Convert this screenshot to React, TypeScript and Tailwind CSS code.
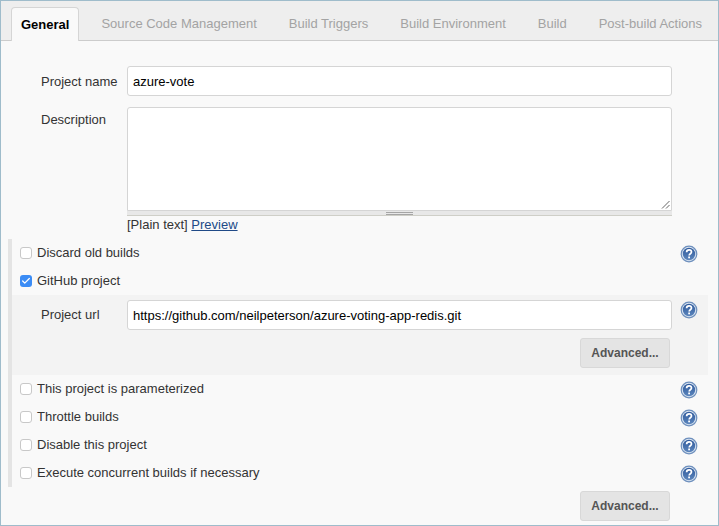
import { Check } from "lucide-react";

const tabs = [
  "Source Code Management",
  "Build Triggers",
  "Build Environment",
  "Build",
  "Post-build Actions",
];

function HelpIcon() {
  return (
    <svg aria-hidden="true" className="h-[18px] w-[18px] shrink-0" viewBox="0 0 18 18">
      <defs>
        <linearGradient id="help-fill" x1="0" y1="0" x2="0" y2="1">
          <stop offset="0" stopColor="#2f5a9c" />
          <stop offset="1" stopColor="#5c86bd" />
        </linearGradient>
      </defs>
      <circle cx="9" cy="9" r="8.4" fill="#6d8fbd" />
      <circle cx="9" cy="9" r="7.2" fill="#dbe5f1" />
      <circle cx="9" cy="9" r="6.2" fill="url(#help-fill)" />
      <path
        d="M6.6 7.2c0-1.5 1-2.4 2.5-2.4s2.4.9 2.4 2.1c0 1.8-2.3 1.9-2.3 3.6"
        fill="none"
        stroke="#fff"
        strokeWidth="1.7"
      />
      <rect x="8.2" y="11.5" width="1.8" height="1.8" fill="#fff" />
    </svg>
  );
}

function Checkbox({ checked = false }: { checked?: boolean }) {
  return checked ? (
    <span className="flex h-3 w-3 shrink-0 items-center justify-center rounded-[3px] bg-[#3b8cf5]">
      <Check className="h-2.5 w-2.5 text-white" strokeWidth={3} />
    </span>
  ) : (
    <span className="h-3 w-3 shrink-0 rounded-[3px] border border-[#c8c8c8] bg-white" />
  );
}

function CheckRow({ label, checked, help = true }: { label: string; checked?: boolean; help?: boolean }) {
  return (
    <div className="flex h-7 items-center justify-between pl-[8px] pr-[20px]">
      <label className="flex items-center gap-[5px] text-[#333]">
        <Checkbox checked={checked} />
        <span className="-mt-0.5">{label}</span>
      </label>
      {help ? (
        <span className="mt-0.5">
          <HelpIcon />
        </span>
      ) : null}
    </div>
  );
}

function TextField({ value }: { value: string }) {
  return (
    <div className="flex h-[30px] w-[545px] items-center rounded-[3px] border border-[#d5d5d5] bg-white px-[5px] text-black">
      {value}
    </div>
  );
}

function AdvancedButton() {
  return (
    <button className="h-[30px] w-[90px] rounded-[3px] border border-[#d8d8d8] bg-[#e4e4e4] text-[12px] font-bold text-[#555]">
      Advanced...
    </button>
  );
}

export default function App() {
  return (
    <div className="flex h-[526px] w-[719px] flex-col border border-[#9fbccb] bg-[#f9f9f9] font-['Liberation_Sans',Arial,sans-serif] text-[13px] leading-none">
      <nav className="flex h-[40px] shrink-0 items-end whitespace-nowrap border-b border-[#cccccc] bg-[#eeeeee] pl-[10px]">
        <div className="-mb-px flex h-[34px] items-center rounded-t-[4px] border border-b-0 border-[#d5d5d5] bg-[#f9f9f9] px-[9px] font-bold text-black">
          General
        </div>
        <div className="ml-[22px] flex h-[33px] items-center gap-[32px] text-[#a3a3a3]">
          {tabs.map((tab) => (
            <span key={tab}>{tab}</span>
          ))}
        </div>
      </nav>

      <div className="flex flex-col pt-[25px]">
        <div className="flex items-center pl-[126px]">
          <span className="-ml-[86px] w-[86px] text-[#333]">Project name</span>
          <TextField value="azure-vote" />
        </div>

        <div className="mt-[11px] flex pl-[126px]">
          <span className="-ml-[86px] mt-[6px] w-[86px] text-[#333]">Description</span>
          <div className="w-[545px]">
            <div className="relative h-[104px] rounded-t-[3px] border border-[#d5d5d5] bg-white">
              <svg aria-hidden="true" className="absolute bottom-px right-px h-2.5 w-2.5" viewBox="0 0 10 10">
                <path d="M2 9.5 9.5 2M6 9.5 9.5 6" stroke="#666" strokeWidth="1" />
              </svg>
            </div>
            <div className="flex h-[5px] justify-center border-b border-[#cfcfc8] bg-[#e8e8e8]">
              <span className="mt-[1px] h-[3px] w-[27px] border-y border-[#a5a5a5]" />
            </div>
            <p className="h-[16px] pt-px leading-[16px] text-[#333]">
              [Plain text]{" "}
              <span className="text-[#204a87] underline">Preview</span>
            </p>
          </div>
        </div>

        <div className="mt-[7px] ml-[7px] border-l-[4px] border-[#e4e4e4]">
          <CheckRow label="Discard old builds" />
          <CheckRow label="GitHub project" checked help={false} />

          <div className="mr-[10px] h-[80px] bg-[#f3f3f3] pt-[5px]">
            <div className="flex items-start pl-[115px]">
              <span className="-ml-[86px] mt-[8px] w-[86px] text-[#333]">Project url</span>
              <TextField value="https://github.com/neilpeterson/azure-voting-app-redis.git" />
              <span className="ml-[8px] mt-px">
                <HelpIcon />
              </span>
            </div>
            <div className="mt-[8px] flex justify-end pr-[38px]">
              <AdvancedButton />
            </div>
          </div>

          <CheckRow label="This project is parameterized" />
          <CheckRow label="Throttle builds" />
          <CheckRow label="Disable this project" />
          <CheckRow label="Execute concurrent builds if necessary" />
        </div>

        <div className="mt-[4px] flex justify-end pr-[48px]">
          <AdvancedButton />
        </div>
      </div>
    </div>
  );
}
